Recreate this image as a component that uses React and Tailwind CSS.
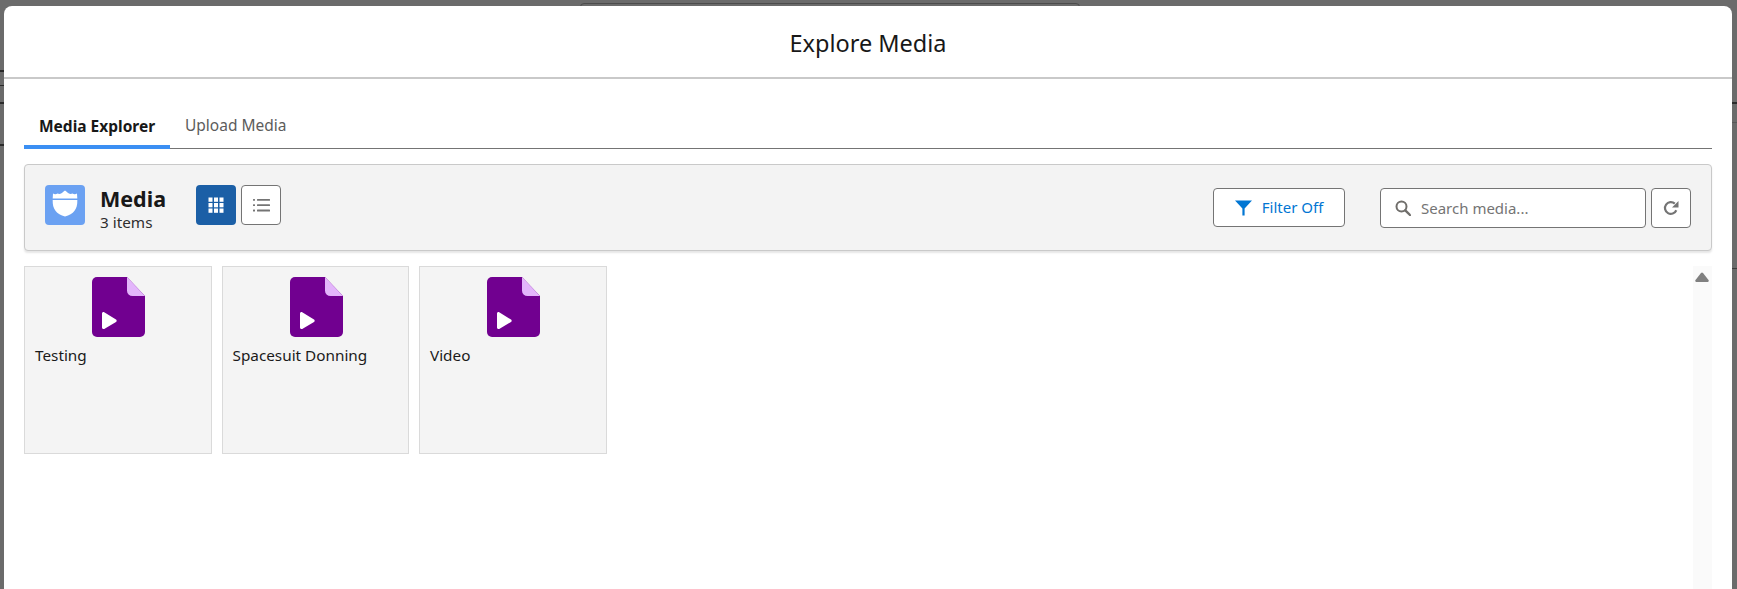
import React from 'react';

const items = ['Testing', 'Spacesuit Donning', 'Video'];

function ShieldIcon() {
  return (
    <svg className="w-10 h-10" viewBox="0 0 40 40" aria-hidden="true">
      <path d="M8 8.500c1.500 1 3.200.9 4.500 0 1.300.7 2.800.6 4-.3 1-.6 2-1.500 3.500-2.700 1.500 1.200 2.500 2.100 3.500 2.700 1.200.9 2.700 1 4 .3 1.300.9 3 1 4.500 0l.3 5H7.700z" fill="#fff" />
      <path d="M7.700 15h24.600c.5 8.500-3.800 14.500-12.300 16.500C11.500 29.500 7.200 23.500 7.700 15z" fill="#fff" />
    </svg>
  );
}

function GridIcon() {
  return (
    <svg className="w-4 h-4" viewBox="0 0 16 16" fill="#fff" aria-hidden="true">
      <rect x="0.500" y="0.500" width="4" height="4.300" />
      <rect x="6" y="0.500" width="4" height="4.300" />
      <rect x="11.500" y="0.500" width="4" height="4.300" />
      <rect x="0.500" y="6" width="4" height="4.300" />
      <rect x="6" y="6" width="4" height="4.300" />
      <rect x="11.500" y="6" width="4" height="4.300" />
      <rect x="0.500" y="11.500" width="4" height="4.300" />
      <rect x="6" y="11.500" width="4" height="4.300" />
      <rect x="11.500" y="11.500" width="4" height="4.300" />
    </svg>
  );
}

function ListIcon() {
  return (
    <svg className="w-[17px] h-[17px]" viewBox="0 0 17 17" fill="#747474" aria-hidden="true">
      <rect x="0" y="2" width="2" height="1.800" rx="0.500" />
      <rect x="4" y="2" width="13" height="1.800" rx="0.500" />
      <rect x="0" y="7.300" width="2" height="1.800" rx="0.500" />
      <rect x="4" y="7.300" width="13" height="1.800" rx="0.500" />
      <rect x="0" y="12.600" width="2" height="1.800" rx="0.500" />
      <rect x="4" y="12.600" width="13" height="1.800" rx="0.500" />
    </svg>
  );
}

function FilterIcon() {
  return (
    <svg className="w-[17px] h-4" viewBox="0 0 17 16" fill="#0176d3" aria-hidden="true">
      <path d="M0 0.500h17L9.600 8.500V15.500H7.400V8.500z" />
    </svg>
  );
}

function SearchIcon() {
  return (
    <svg className="w-4 h-4" viewBox="0 0 16 16" fill="none" stroke="#706e6b" aria-hidden="true">
      <circle cx="6.500" cy="6.500" r="5" strokeWidth="2" />
      <path d="M10.300 10.300l4.700 4.700" strokeWidth="2.400" strokeLinecap="round" />
    </svg>
  );
}

function RefreshIcon() {
  return (
    <svg className="w-4 h-4" viewBox="0 0 16 16" fill="none" aria-hidden="true">
      <path d="M13.300 10.300A5.900 5.900 0 1 1 11.800 3.600" stroke="#747474" strokeWidth="2.200" />
      <path d="M15.500 1v6.500H9z" fill="#747474" />
    </svg>
  );
}

function MediaFileIcon() {
  return (
    <svg className="w-[53px] h-[60px]" viewBox="0 0 53 60" aria-hidden="true">
      <path d="M5 0h30l18 19v36a5 5 0 0 1-5 5H5a5 5 0 0 1-5-5V5a5 5 0 0 1 5-5z" fill="#710090" />
      <path d="M35 0l18 19H40.500a5.500 5.500 0 0 1-5.500-5.500z" fill="#e3b5fb" />
      <path d="M10 36.500c0-1.200 1.200-1.900 2.200-1.300l11.800 7.300c.9.600.9 1.900 0 2.500l-11.800 6.900c-1 .6-2.200-.1-2.200-1.300z" fill="#fff" />
    </svg>
  );
}

function MediaCard({ name }) {
  return (
    <div className="w-[187.5px] h-[188px] shrink-0 bg-[#f4f4f4] border border-[#dadada] pt-[10px]">
      <div className="flex justify-center pl-[2px]">
        <MediaFileIcon />
      </div>
      <div className="mt-[8px] px-[10px] text-[15.3px] leading-[21px] text-[#1a1a1a]">{name}</div>
    </div>
  );
}

export default function App() {
  return (
    <div className="relative h-[589px] overflow-hidden bg-[#6b6b6b] pt-[6px] pl-[4px] pr-[5px] font-['Noto_Sans','Open_Sans',sans-serif]">
      {/* page showing through the backdrop */}
      <div className="absolute left-[580px] top-[3px] w-[500px] h-[8px] border border-[#4c4c4c] rounded-t" />
      <div className="absolute left-0 top-[70px] w-[4px] h-[2px] bg-[#2b2b2b]" />
      <div className="absolute left-0 top-[85px] w-[4px] h-px bg-[#2b2b2b]" />
      <div className="absolute left-0 top-[102px] w-[4px] h-[2px] bg-[#2b2b2b]" />
      <div className="absolute left-0 top-[144px] w-[4px] h-[2px] bg-[#2b2b2b]" />
      <div className="absolute right-0 top-[102px] w-[5px] h-[2px] bg-[#2b2b2b]" />
      <div className="absolute right-0 top-[122px] w-[5px] h-px bg-[#585858]" />
      <div className="absolute right-0 top-[268px] w-[5px] h-px bg-[#3c3c3c]" />

      <div className="relative h-[600px] bg-white rounded-t-lg">
        <header className="h-[73px] border-b-2 border-[#c9c9c9] flex items-center justify-center">
          <h1 className="text-[23.5px] leading-[30px] text-[#181818] mt-[2px]">Explore Media</h1>
        </header>

        <div className="px-[20px] pt-[20px]">
          <div className="h-[50px] flex items-end border-b border-[#747474]">
            <div className="h-[43px] w-[146px] -mb-px border-b-[4px] border-[#3b8ff3] pl-[15px] pt-[10px] text-[15.5px] leading-[20px] font-bold text-[#181818] whitespace-nowrap">
              Media Explorer
            </div>
            <div className="h-[43px] pl-[15px] pt-[10px] text-[15.5px] leading-[20px] text-[#5c5c5c]">Upload Media</div>
          </div>

          <div className="mt-[15px] h-[87px] bg-[#f3f3f3] border border-[#c9c9c9] rounded shadow-[0_2px_2px_rgba(0,0,0,0.1)] flex items-start pl-[20px] pr-[20px]">
            <div className="mt-[20px] w-10 h-10 rounded bg-[#6ba1f2]">
              <ShieldIcon />
            </div>
            <div className="ml-[15px] mt-[21px]">
              <div className="text-[21.500px] leading-[26px] font-bold text-[#181818]">Media</div>
              <div className="text-[15.3px] leading-[20px] text-[#2e2e2e]">3 items</div>
            </div>
            <div className="ml-[30px] mt-[20px] flex gap-[5px]">
              <button className="w-10 h-10 rounded bg-[#1b5fa6] flex items-center justify-center">
                <GridIcon />
              </button>
              <button className="w-10 h-10 rounded bg-white border border-[#747474] flex items-center justify-center">
                <ListIcon />
              </button>
            </div>
            <div className="ml-auto mt-[23px] flex items-start">
              <button className="w-[132px] h-[39px] rounded bg-white border border-[#747474] flex items-center justify-center gap-[10px] text-[15px] text-[#0176d3]">
                <FilterIcon />
                Filter Off
              </button>
              <div className="ml-[35px] w-[266px] h-10 rounded bg-white border border-[#747474] flex items-center pl-[14px] gap-[10px] text-[15px] text-[#747474]">
                <SearchIcon />
                Search media...
              </div>
              <button className="ml-[5px] w-10 h-10 rounded bg-white border border-[#747474] flex items-center justify-center">
                <RefreshIcon />
              </button>
            </div>
          </div>

          <div className="mt-[15px] flex justify-between">
            <div className="flex gap-[10px]">
              {items.map((name) => (
                <MediaCard key={name} name={name} />
              ))}
            </div>
            <div className="w-[19px] h-[330px] bg-[#fafafa] flex justify-center pt-[6px] pr-[2px]">
              <svg className="w-[14px] h-[10px]" viewBox="0 0 14 10" fill="#808080" aria-hidden="true">
                <path d="M6 1a1.300 1.300 0 0 1 2 0l5.500 7c.6.800.1 2-1 2H1.500c-1.100 0-1.600-1.200-1-2z" />
              </svg>
            </div>
          </div>
        </div>
      </div>
    </div>
  );
}
